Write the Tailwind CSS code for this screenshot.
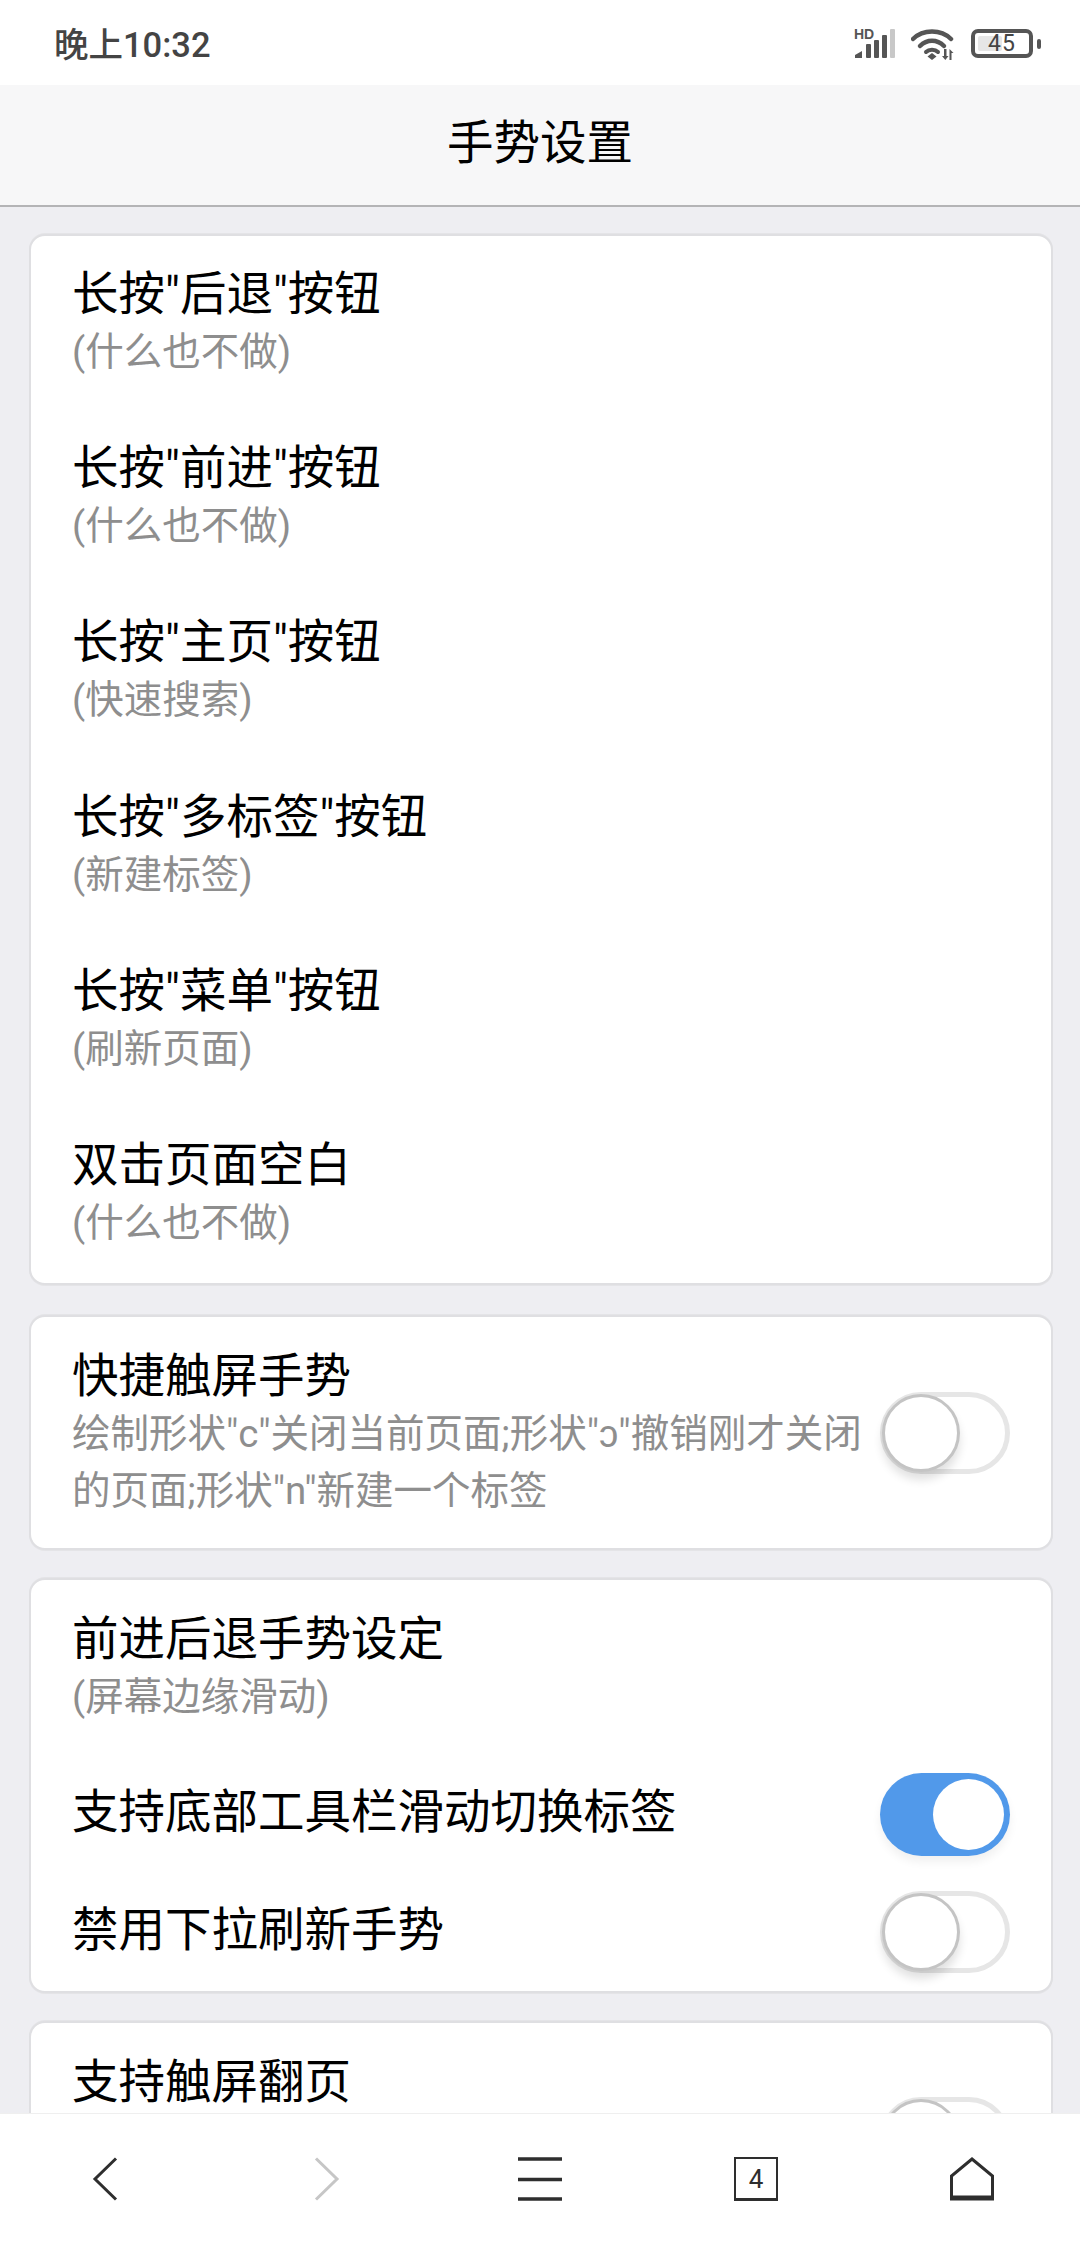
<!DOCTYPE html>
<html lang="zh-CN">
<head>
    <meta charset="UTF-8">
    <meta name="viewport" content="width=device-width, initial-scale=1.0">
    <title>手势设置</title>
    <script src="https://cdn.jsdelivr.net/npm/@tailwindcss/browser@4"></script>
</head>
<body class="bg-[#eeeef2]">
<div class="relative w-[1080px] h-[2244px] overflow-hidden flex flex-col font-['Roboto','Noto_Sans_CJK_SC',sans-serif]">

    <!-- status bar -->
    <div class="h-[85px] shrink-0 bg-white flex items-center justify-between pl-[54px] pr-[47px]">
        <span class="text-[34.5px] font-medium text-[#444] leading-none mt-[6px]">晚上10:32</span>
        <div class="flex items-center mt-[2px]">
            <svg width="42" height="36" viewBox="0 -4 42 36" class="mr-[15px] -mt-[4px]">
                <text x="0" y="11" font-size="14" font-weight="700" fill="#555" font-family="Liberation Sans">HD</text>
                <path d="M1 30v-3l7-4v7z" fill="#555"/>
                <rect x="12" y="16" width="5" height="14" rx="1" fill="#555"/>
                <rect x="20" y="12" width="5" height="18" rx="1" fill="#555"/>
                <rect x="28" y="7" width="5" height="23" rx="1" fill="#555"/>
                <rect x="36" y="1" width="5" height="29" rx="1" fill="#c8c8c8"/>
            </svg>
            <svg width="44" height="32" viewBox="0 0 44 32" class="mr-[16px]">
                <path d="M2 11C12 1 30 1 40 11" fill="none" stroke="#555" stroke-width="4.500" stroke-linecap="round"/>
                <path d="M9 18C16 11 26 11 33 18" fill="none" stroke="#555" stroke-width="4.500" stroke-linecap="round"/>
                <path d="M15 24C18 21 24 21 27 24" fill="none" stroke="#555" stroke-width="4" stroke-linecap="round"/>
                <path d="M21 25l4.500 3.500-4.500 3.500-4.500-3.500z" fill="#555"/>
                <path d="M33 21h2.500v7h2l-3.200 4-3.300-4h2zM38.500 32v-11l4 4h-2v7z" fill="#555"/>
            </svg>
            <div class="relative w-[62px] h-[29px] border-[4px] border-[#555] rounded-[7px] flex items-center justify-center">
                <div class="absolute left-[3px] top-[3px] bottom-[3px] w-[24px] bg-[#e6e6e6] rounded-[2px]"></div>
                <span class="relative text-[23px] leading-none text-[#444] tracking-[1px]">45</span>
                <div class="absolute right-[-12px] top-[6px] w-[4px] h-[10px] bg-[#555] rounded-[2px]"></div>
            </div>
        </div>
    </div>

    <!-- title bar -->
    <div class="h-[122px] shrink-0 bg-[#f7f7f8] border-b-2 border-[#b4b4b6] flex items-center justify-center">
        <h1 class="text-[46.5px] leading-none font-normal text-black mb-[4px]">手势设置</h1>
    </div>

    <!-- settings list -->
    <div class="flex-1 min-h-0 overflow-hidden pl-[29px] pr-[27px] pt-[27px] flex flex-col">

        <div class="shrink-0 bg-white border-2 border-[#dfdfe2] rounded-[16px] mb-[30px] pb-[2px] shadow-[0_-1px_0_#e4e4e7,0_1px_0_#e4e4e7]">
            <div class="h-[174.2px] pl-[41px] pt-[29px]">
                <p class="text-[46.5px] leading-[58px] text-black">长按"后退"按钮</p>
                <p class="text-[38.5px] leading-[57px] text-[#8e8e8e]">(什么也不做)</p>
            </div>
            <div class="h-[174.2px] pl-[41px] pt-[29px]">
                <p class="text-[46.5px] leading-[58px] text-black">长按"前进"按钮</p>
                <p class="text-[38.5px] leading-[57px] text-[#8e8e8e]">(什么也不做)</p>
            </div>
            <div class="h-[174.2px] pl-[41px] pt-[29px]">
                <p class="text-[46.5px] leading-[58px] text-black">长按"主页"按钮</p>
                <p class="text-[38.5px] leading-[57px] text-[#8e8e8e]">(快速搜索)</p>
            </div>
            <div class="h-[174.2px] pl-[41px] pt-[29px]">
                <p class="text-[46.5px] leading-[58px] text-black">长按"多标签"按钮</p>
                <p class="text-[38.5px] leading-[57px] text-[#8e8e8e]">(新建标签)</p>
            </div>
            <div class="h-[174.2px] pl-[41px] pt-[29px]">
                <p class="text-[46.5px] leading-[58px] text-black">长按"菜单"按钮</p>
                <p class="text-[38.5px] leading-[57px] text-[#8e8e8e]">(刷新页面)</p>
            </div>
            <div class="h-[174.2px] pl-[41px] pt-[29px]">
                <p class="text-[46.5px] leading-[58px] text-black">双击页面空白</p>
                <p class="text-[38.5px] leading-[57px] text-[#8e8e8e]">(什么也不做)</p>
            </div>
        </div>

        <div class="shrink-0 bg-white border-2 border-[#dfdfe2] rounded-[16px] mb-[28px] h-[235px] pl-[41px] pr-[41px] flex items-center justify-between shadow-[0_-1px_0_#e4e4e7,0_1px_0_#e4e4e7]">
            <div class="w-[800px] shrink-0">
                <p class="text-[46.5px] leading-[58px] text-black">快捷触屏手势</p>
                <p class="text-[38.5px] leading-[57px] text-[#8e8e8e]">绘制形状"c"关闭当前页面;形状"ɔ"撤销刚才关闭的页面;形状"n"新建一个标签</p>
            </div>
            <div class="relative w-[130px] h-[82px] shrink-0 rounded-full border-[5px] border-[#e6e6e6]">
                <div class="absolute left-[-3px] top-[-3px] w-[78px] h-[78px] rounded-full bg-white border-[3px] border-[#c4c4c4] shadow-[0_8px_10px_rgba(0,0,0,0.12)]"></div>
            </div>
        </div>

        <div class="shrink-0 bg-white border-2 border-[#dfdfe2] rounded-[16px] mb-[28px] pl-[41px] pr-[41px] shadow-[0_-1px_0_#e4e4e7,0_1px_0_#e4e4e7]">
            <div class="h-[171px] pt-[30px]">
                <p class="text-[46.5px] leading-[58px] text-black">前进后退手势设定</p>
                <p class="text-[38.5px] leading-[57px] text-[#8e8e8e]">(屏幕边缘滑动)</p>
            </div>
            <div class="h-[115px] flex items-center justify-between">
                <p class="text-[46.5px] leading-[58px] text-black mt-[6px]">支持底部工具栏滑动切换标签</p>
                <div class="relative w-[130px] h-[83px] shrink-0 mt-[11px] rounded-full bg-[#5199ea] shadow-[0_6px_10px_rgba(0,0,0,0.06)]">
                    <div class="absolute right-[6px] top-[6px] w-[71px] h-[71px] rounded-full bg-white"></div>
                </div>
            </div>
            <div class="h-[125px] flex items-center justify-between">
                <p class="text-[46.5px] leading-[58px] text-black mt-[2px]">禁用下拉刷新手势</p>
                <div class="relative w-[130px] h-[82px] shrink-0 mt-[7px] rounded-full border-[5px] border-[#e6e6e6]">
                    <div class="absolute left-[-3px] top-[-3px] w-[78px] h-[78px] rounded-full bg-white border-[3px] border-[#c4c4c4] shadow-[0_8px_10px_rgba(0,0,0,0.12)]"></div>
                </div>
            </div>
        </div>

        <div class="shrink-0 bg-white border-2 border-[#dfdfe2] rounded-[16px] pl-[41px] pr-[41px] h-[200px] flex justify-between shadow-[0_-1px_0_#e4e4e7,0_1px_0_#e4e4e7]">
            <p class="text-[46.5px] leading-[58px] text-black pt-[30px]">支持触屏翻页</p>
            <div class="relative w-[130px] h-[82px] mt-[74px] shrink-0 rounded-full border-[5px] border-[#e6e6e6]">
                <div class="absolute left-[-3px] top-[-3px] w-[78px] h-[78px] rounded-full bg-white border-[3px] border-[#c4c4c4]"></div>
            </div>
        </div>
    </div>

    <!-- bottom toolbar -->
    <div class="h-[131px] shrink-0 bg-white border-t border-[#efefef] grid grid-cols-5">
        <div class="flex items-center justify-center">
            <svg width="26" height="44" viewBox="0 0 26 44" class="-ml-[7px]"><path d="M24 1.500L3 22l21 20.500" fill="none" stroke="#2e2e2e" stroke-width="3"/></svg>
        </div>
        <div class="flex items-center justify-center">
            <svg width="26" height="44" viewBox="0 0 26 44" class="ml-[5px]"><path d="M2 1.500L23 22 2 42.500" fill="none" stroke="#c6c6c6" stroke-width="3"/></svg>
        </div>
        <div class="flex items-center justify-center">
            <svg width="44" height="44" viewBox="0 0 44 44"><path d="M0 2h44M0 22.500h44M0 42h44" fill="none" stroke="#2e2e2e" stroke-width="3.500"/></svg>
        </div>
        <div class="flex items-center justify-center">
            <div class="w-[44px] h-[44px] border-2 border-b-[3px] border-[#2e2e2e] flex items-center justify-center text-[26px] leading-none text-[#2e2e2e]">4</div>
        </div>
        <div class="flex items-center justify-center">
            <svg width="44" height="44" viewBox="0 0 44 44"><path d="M1.500 41V19L22 2l20.500 17v22z" fill="none" stroke="#2e2e2e" stroke-width="3"/><path d="M0 41h44" stroke="#2e2e2e" stroke-width="5"/></svg>
        </div>
    </div>
</div>
</body>
</html>
